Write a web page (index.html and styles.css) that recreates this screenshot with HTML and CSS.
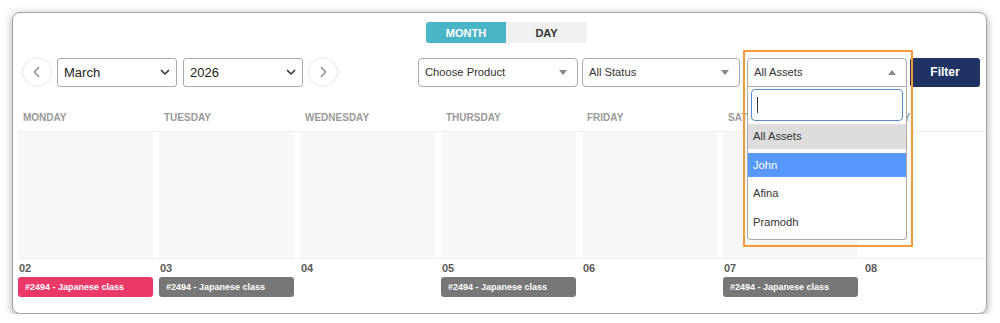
FILE: index.html
```html
<!DOCTYPE html>
<html lang="en">
<head>
  <meta charset="UTF-8" />
  <meta name="viewport" content="width=device-width, initial-scale=1.0" />
  <title>Booking Calendar</title>
  <link rel="stylesheet" href="styles.css">
</head>
<body>
  <div class="window">
    <div class="view-switch">
      <button class="switch-btn active">MONTH</button>
      <button class="switch-btn">DAY</button>
    </div>

    <div class="controls">
      <div class="nav">
        <button class="circle-btn">
          <svg width="8" height="12" viewBox="0 0 8 12"><path d="M6 1 1.5 6 6 11" fill="none" stroke="#888" stroke-width="1.4"/></svg>
        </button>
        <div class="native-select">
          <span>March</span>
          <svg width="10" height="6" viewBox="0 0 10 6"><path d="M1 1 5 5 9 1" fill="none" stroke="#333" stroke-width="1.5"/></svg>
        </div>
        <div class="native-select year">
          <span>2026</span>
          <svg width="10" height="6" viewBox="0 0 10 6"><path d="M1 1 5 5 9 1" fill="none" stroke="#333" stroke-width="1.5"/></svg>
        </div>
        <button class="circle-btn">
          <svg width="8" height="12" viewBox="0 0 8 12"><path d="M2 1 6.5 6 2 11" fill="none" stroke="#888" stroke-width="1.4"/></svg>
        </button>
      </div>

      <div class="filters">
        <div class="s2 product">Choose Product <span class="caret down"></span></div>
        <div class="s2 status">All Status <span class="caret down"></span></div>
        <div class="s2-wrap">
          <div class="s2 open">All Assets <span class="caret up"></span></div>
          <div class="s2-dropdown">
            <div class="s2-search"><span class="cursor"></span></div>
            <ul class="s2-options">
              <li class="selected">All Assets</li>
              <li class="hover">John</li>
              <li>Afina</li>
              <li>Pramodh</li>
            </ul>
          </div>
          <div class="highlight"></div>
        </div>
        <button class="filter-btn">Filter</button>
      </div>
    </div>

    <div class="calendar">
      <div class="cal-row cal-head">
        <div>Monday</div>
        <div>Tuesday</div>
        <div>Wednesday</div>
        <div>Thursday</div>
        <div>Friday</div>
        <div>Saturday</div>
        <div>Sunday</div>
      </div>
      <div class="cal-row cal-cells">
        <div class="cell"></div>
        <div class="cell"></div>
        <div class="cell"></div>
        <div class="cell"></div>
        <div class="cell"></div>
        <div class="cell"></div>
        <div class="cell weekend"></div>
      </div>
      <div class="cal-row cal-dates">
        <div><div class="num">02</div><div class="event pink">#2494 - Japanese class</div></div>
        <div><div class="num">03</div><div class="event">#2494 - Japanese class</div></div>
        <div><div class="num">04</div></div>
        <div><div class="num">05</div><div class="event">#2494 - Japanese class</div></div>
        <div><div class="num">06</div></div>
        <div><div class="num">07</div><div class="event">#2494 - Japanese class</div></div>
        <div><div class="num">08</div></div>
      </div>
    </div>
  </div>
</body>
</html>
```

FILE: styles.css
```css
body {
  margin: 0;
  background: #fff;
  font-family: "Liberation Sans", Arial, sans-serif;
  color: #333;
}
.window {
  box-sizing: border-box;
  width: 975px;
  height: 302px;
  margin: 12px 0 0 12px;
  border: 1px solid #a6a6a6;
  border-radius: 8px;
  box-shadow: 0 2px 9px rgba(0, 0, 0, 0.35);
  background: #fff;
  overflow: hidden;
  position: relative;
}
.view-switch {
  display: flex;
  padding: 9px 0 0 413px;
}
.switch-btn {
  width: 80px;
  height: 21px;
  border: 0;
  padding: 0;
  font-family: inherit;
  font-size: 11px;
  font-weight: bold;
  color: #333;
  background: #f0f0f0;
  border-radius: 0 3px 3px 0;
}
.switch-btn + .switch-btn {
  width: 81px;
}
.switch-btn.active {
  background: #4bb5c8;
  color: #fff;
  border-radius: 3px 0 0 3px;
}
.controls {
  display: flex;
  align-items: center;
  margin-top: 14px;
  padding-left: 9px;
  height: 30px;
}
.nav {
  display: flex;
  align-items: center;
  gap: 5px;
}
.circle-btn {
  width: 30px;
  height: 30px;
  border: 1px solid #e6e6e6;
  border-radius: 50%;
  background: #fff;
  padding: 0;
  display: flex;
  align-items: center;
  justify-content: center;
}
.native-select {
  box-sizing: border-box;
  width: 120px;
  height: 29px;
  border: 1px solid #aaa;
  border-radius: 3px;
  display: flex;
  align-items: center;
  justify-content: space-between;
  padding: 0 6px 0 6px;
  font-size: 13px;
  color: #222;
}
.native-select.year {
  margin-left: 1px;
}
.filters {
  display: flex;
  align-items: center;
  margin-left: 80px;
}
.s2 {
  box-sizing: border-box;
  width: 160px;
  height: 29px;
  border: 1px solid #aaa;
  border-radius: 4px;
  background: #fff;
  display: flex;
  align-items: center;
  justify-content: space-between;
  padding: 0 10px 0 6px;
  font-size: 11.2px;
  color: #333;
}
.s2.status {
  width: 158px;
  margin-left: 4px;
}
.s2.open {
  border-radius: 4px 4px 0 0;
}
.caret {
  width: 0;
  height: 0;
  border-left: 4px solid transparent;
  border-right: 4px solid transparent;
}
.caret.down {
  border-top: 5px solid #888;
}
.caret.up {
  border-bottom: 5px solid #888;
}
.s2-wrap {
  position: relative;
  margin-left: 7px;
}
.s2-dropdown {
  position: absolute;
  left: 0;
  top: 29px;
  box-sizing: border-box;
  width: 160px;
  border: 1px solid #aaa;
  border-top: 0;
  border-radius: 0 0 4px 4px;
  background: #fff;
  padding-bottom: 4px;
  z-index: 2;
}
.s2-search {
  box-sizing: border-box;
  height: 32px;
  margin: 2px 3px 3px 3px;
  border: 1px solid #5b8cc4;
  border-radius: 4px;
  display: flex;
  align-items: center;
  padding-left: 5px;
}
.cursor {
  width: 1px;
  height: 16px;
  background: #333;
}
.s2-options {
  list-style: none;
  margin: 0;
  padding: 0;
}
.s2-options li {
  height: 25px;
  line-height: 25px;
  margin-bottom: 4px;
  padding-left: 5px;
  font-size: 11.2px;
  color: #333;
}
.s2-options li:last-child {
  margin-bottom: 0;
}
.s2-options li.selected {
  background: #ddd;
}
.s2-options li.hover {
  background: #5897fb;
  color: #fff;
  height: 24px;
  line-height: 24px;
}
.highlight {
  position: absolute;
  left: -4px;
  top: -8px;
  width: 166px;
  height: 193px;
  border: 2px solid #f59a3c;
  z-index: 3;
}
.filter-btn {
  width: 70px;
  height: 29px;
  margin-left: 3px;
  border: 0;
  border-radius: 3px;
  background: #1e3263;
  color: #fff;
  font-family: inherit;
  font-size: 12px;
  font-weight: bold;
}
.calendar {
  margin: 19px 0 0 5px;
  width: 1000px;
}
.cal-row {
  display: grid;
  grid-template-columns: repeat(7, 135px);
  column-gap: 6px;
}
.cal-head {
  height: 23px;
  line-height: 23px;
  padding-bottom: 2px;
  border-bottom: 1px solid #f0f0f0;
}
.cal-head div {
  padding-left: 5px;
  font-size: 10px;
  font-weight: bold;
  text-transform: uppercase;
  color: #999;
}
.cal-cells {
  border-bottom: 1px solid #f0f0f0;
}
.cell {
  height: 126px;
  background: #f8f8f8;
}
.cell.weekend {
  background: #fff;
}
.num {
  height: 18px;
  line-height: 19px;
  padding-left: 1px;
  font-size: 11px;
  font-weight: bold;
  color: #5a5a5a;
}
.event {
  height: 20px;
  line-height: 20px;
  border-radius: 3px;
  background: #777;
  color: #fff;
  font-size: 9px;
  font-weight: bold;
  padding-left: 7px;
}
.event.pink {
  background: #ea3869;
}
```
